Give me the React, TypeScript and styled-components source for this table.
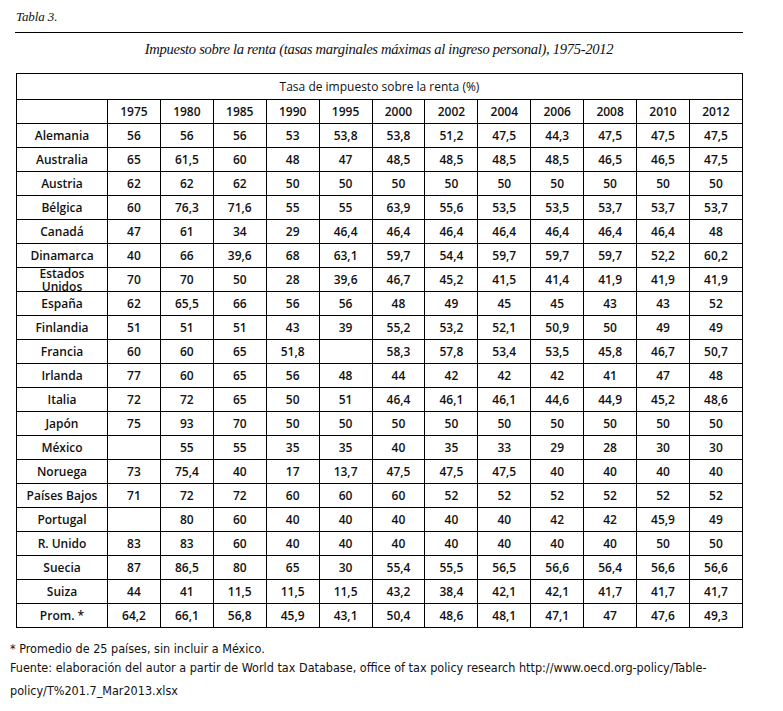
import React from "react";
import styled, { createGlobalStyle } from "styled-components";

const Global = createGlobalStyle`
  html, body { margin: 0; padding: 0; background: #fff; }
  body { width: 783px; height: 711px; overflow: hidden; }
`;

const Page = styled.div`
  padding: 9px 40px 0 15px;
  color: #111;
`;

const Caption = styled.div`
  font-family: "Liberation Serif", "DejaVu Serif", serif;
  font-style: italic;
  font-size: 13px;
  line-height: 16px;
  padding-left: 1px;
  letter-spacing: -0.1px;
`;

const Rule = styled.div`
  height: 1px;
  background: #000;
  margin-top: 7px;
  width: 728px;
`;

const Title = styled.div`
  font-family: "Liberation Serif", "DejaVu Serif", serif;
  font-style: italic;
  font-size: 14.6px;
  line-height: 18px;
  margin-top: 7px;
  width: 728px;
  text-align: center;
  letter-spacing: -0.3px;
`;

const Table = styled.table`
  border-collapse: collapse;
  table-layout: fixed;
  width: 727px;
  margin-top: 15px;
  margin-left: 1px;
  font-family: "Open Sans", "Noto Sans", sans-serif;
  font-size: 12px;
  color: #111;
`;

const Cell = styled.td<{ $head?: boolean }>`
  border: 1px solid #000;
  padding: 0;
  height: ${(p) => (p.$head ? 25 : 23)}px;
  text-align: center;
  vertical-align: middle;
  font-weight: ${(p) => (p.$head ? 400 : 600)};
  line-height: 12px;
  white-space: nowrap;
  overflow: visible;
`;

const Label = styled.div<{ $wrap?: boolean }>`
  height: 23px;
  display: flex;
  align-items: center;
  justify-content: center;
  white-space: ${(p) => (p.$wrap ? "normal" : "nowrap")};
  line-height: 13px;
  padding: 0 10px;
`;

const Notes = styled.div`
  margin-top: 11px;
  margin-left: -5px;
  font-family: "Liberation Sans Narrow", "DejaVu Sans Condensed", "Liberation Sans", sans-serif;
  font-size: 12.5px;
  color: #111;
  width: 740px;
`;

const NoteLine = styled.div`
  line-height: 19px;
`;

const Source = styled.div`
  line-height: 23px;
  margin-top: -2px;
`;

const years = ["1975", "1980", "1985", "1990", "1995", "2000", "2002", "2004", "2006", "2008", "2010", "2012"];

const rows: [string, string[]][] = [
  ["Alemania", ["56", "56", "56", "53", "53,8", "53,8", "51,2", "47,5", "44,3", "47,5", "47,5", "47,5"]],
  ["Australia", ["65", "61,5", "60", "48", "47", "48,5", "48,5", "48,5", "48,5", "46,5", "46,5", "47,5"]],
  ["Austria", ["62", "62", "62", "50", "50", "50", "50", "50", "50", "50", "50", "50"]],
  ["Bélgica", ["60", "76,3", "71,6", "55", "55", "63,9", "55,6", "53,5", "53,5", "53,7", "53,7", "53,7"]],
  ["Canadá", ["47", "61", "34", "29", "46,4", "46,4", "46,4", "46,4", "46,4", "46,4", "46,4", "48"]],
  ["Dinamarca", ["40", "66", "39,6", "68", "63,1", "59,7", "54,4", "59,7", "59,7", "59,7", "52,2", "60,2"]],
  ["Estados Unidos", ["70", "70", "50", "28", "39,6", "46,7", "45,2", "41,5", "41,4", "41,9", "41,9", "41,9"]],
  ["España", ["62", "65,5", "66", "56", "56", "48", "49", "45", "45", "43", "43", "52"]],
  ["Finlandia", ["51", "51", "51", "43", "39", "55,2", "53,2", "52,1", "50,9", "50", "49", "49"]],
  ["Francia", ["60", "60", "65", "51,8", "", "58,3", "57,8", "53,4", "53,5", "45,8", "46,7", "50,7"]],
  ["Irlanda", ["77", "60", "65", "56", "48", "44", "42", "42", "42", "41", "47", "48"]],
  ["Italia", ["72", "72", "65", "50", "51", "46,4", "46,1", "46,1", "44,6", "44,9", "45,2", "48,6"]],
  ["Japón", ["75", "93", "70", "50", "50", "50", "50", "50", "50", "50", "50", "50"]],
  ["México", ["", "55", "55", "35", "35", "40", "35", "33", "29", "28", "30", "30"]],
  ["Noruega", ["73", "75,4", "40", "17", "13,7", "47,5", "47,5", "47,5", "40", "40", "40", "40"]],
  ["Países Bajos", ["71", "72", "72", "60", "60", "60", "52", "52", "52", "52", "52", "52"]],
  ["Portugal", ["", "80", "60", "40", "40", "40", "40", "40", "42", "42", "45,9", "49"]],
  ["R. Unido", ["83", "83", "60", "40", "40", "40", "40", "40", "40", "40", "50", "50"]],
  ["Suecia", ["87", "86,5", "80", "65", "30", "55,4", "55,5", "56,5", "56,6", "56,4", "56,6", "56,6"]],
  ["Suiza", ["44", "41", "11,5", "11,5", "11,5", "43,2", "38,4", "42,1", "42,1", "41,7", "41,7", "41,7"]],
  ["Prom. *", ["64,2", "66,1", "56,8", "45,9", "43,1", "50,4", "48,6", "48,1", "47,1", "47", "47,6", "49,3"]],
];

export default function App() {
  return (
    <>
      <Global />
      <Page>
        <Caption>Tabla 3.</Caption>
        <Rule />
        <Title>
          Impuesto sobre la renta (tasas marginales máximas al ingreso personal), 1975-2012
        </Title>
        <Table>
          <colgroup>
            <col style={{ width: 91 }} />
            {years.map((y) => (
              <col key={y} />
            ))}
          </colgroup>
          <tbody>
            <tr>
              <Cell $head colSpan={13}>
                Tasa de impuesto sobre la renta (%)
              </Cell>
            </tr>
            <tr>
              <Cell />
              {years.map((y) => (
                <Cell key={y}>{y}</Cell>
              ))}
            </tr>
            {rows.map(([name, vals]) => (
              <tr key={name}>
                <Cell>
                  <Label $wrap={name === "Estados Unidos"}>{name}</Label>
                </Cell>
                {vals.map((v, i) => (
                  <Cell key={i}>{v}</Cell>
                ))}
              </tr>
            ))}
          </tbody>
        </Table>
        <Notes>
          <NoteLine>* Promedio de 25 países, sin incluir a México.</NoteLine>
          <Source>
            Fuente: elaboración del autor a partir de World tax Database, office of tax policy research
            http://www.oecd.org-policy/Table-policy/T%201.7_Mar2013.xlsx
          </Source>
        </Notes>
      </Page>
    </>
  );
}
